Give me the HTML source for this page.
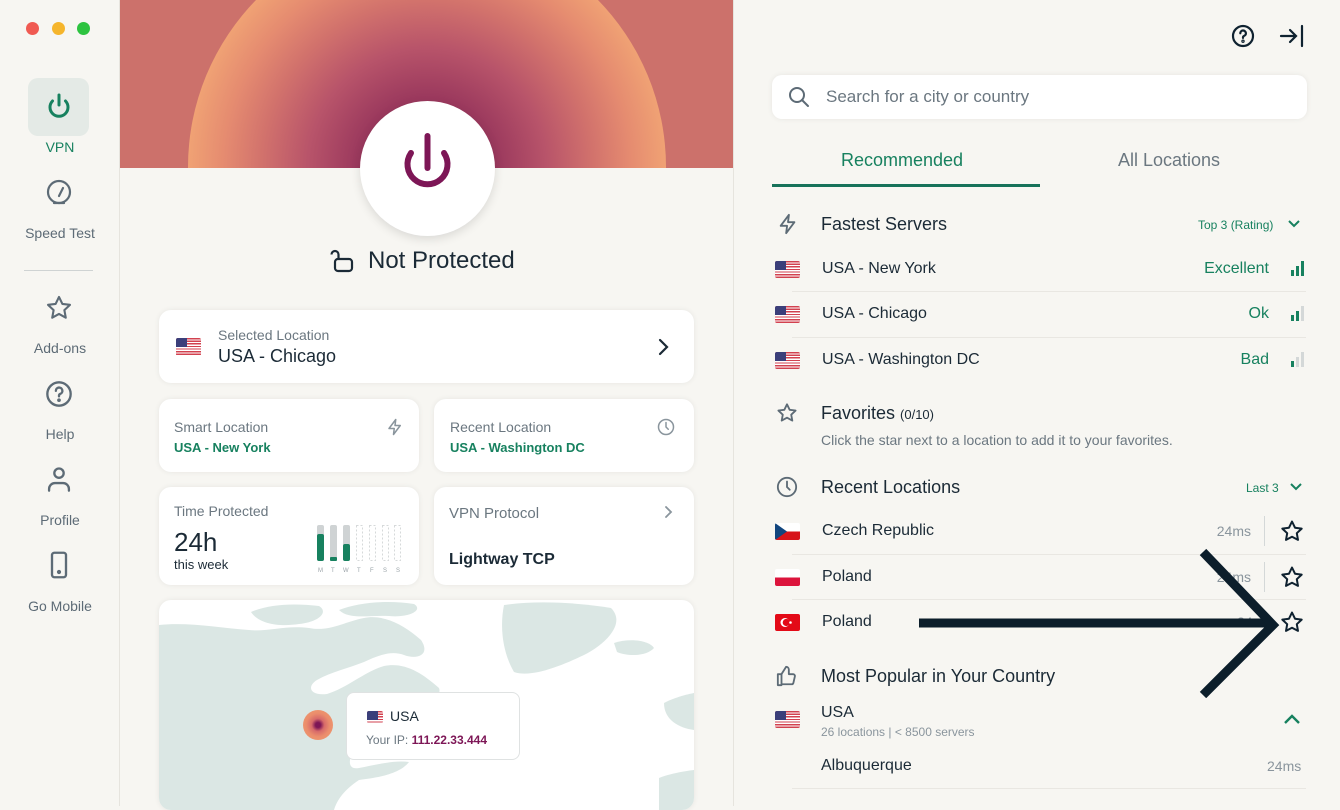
<!DOCTYPE html>
<html><head><meta charset="utf-8"><style>
*{box-sizing:border-box;margin:0;padding:0}
body{width:1340px;height:806px;overflow:hidden;background:#f7f6f2;font-family:"Liberation Sans",sans-serif;color:#1b2a36;position:relative}
.abs{position:absolute}
.side{left:0;top:0;width:120px;height:806px;border-right:1px solid #e6e4de;background:#f7f6f2}
.nav{position:absolute;left:0;width:120px;text-align:center;font-size:14px;color:#5d6b76}
.card{position:absolute;background:#fff;border-radius:12px;box-shadow:0 0 6px rgba(0,0,0,.07)}
.lbl{font-size:14px;color:#6b7780}
.grn{color:#17815f}
.row{position:absolute;left:772px;width:534px;height:45px}
.row .n{position:absolute;left:50px;top:13px;font-size:16px;color:#1b2a36}
.flag{position:absolute;left:3px;width:25px;height:17px;border-radius:2px;overflow:hidden}
.us{background:repeating-linear-gradient(#d2414f 0 1.3px,#fff 1.3px 2.6px)}
.us:after{content:"";position:absolute;left:0;top:0;width:11px;height:9px;background:#3b3f7a}
.sep{position:absolute;left:792px;width:514px;height:1px;background:#e9e7e2}
.h{position:absolute;left:821px;font-size:18px;color:#1b2a36}
</style></head><body>

<div class="abs side"></div>
<div class="abs" style="left:26px;top:22px;width:13px;height:13px;border-radius:50%;background:#f05a52"></div>
<div class="abs" style="left:52px;top:22px;width:13px;height:13px;border-radius:50%;background:#f5b52c"></div>
<div class="abs" style="left:77px;top:22px;width:13px;height:13px;border-radius:50%;background:#2dc340"></div>

<div class="abs" style="left:28px;top:78px;width:61px;height:58px;border-radius:10px;background:#e4eae6"></div>
<svg class="abs" style="left:44px;top:92px" width="30" height="30" viewBox="0 0 30 30" fill="none" stroke="#17815f" stroke-width="3" stroke-linecap="round"><path d="M15 3v10"/><path d="M8.5 9a9 9 0 1 0 13 0"/></svg>
<div class="nav" style="top:139px;color:#17815f">VPN</div>
<svg class="abs" style="left:45px;top:179px" width="28" height="28" viewBox="0 0 28 28" fill="none" stroke="#5d6b76" stroke-width="2.2" stroke-linecap="round"><circle cx="14" cy="13" r="11"/><path d="M14 17l4-8"/><path d="M9 24h10"/></svg>
<div class="nav" style="top:225px">Speed Test</div>
<div class="abs" style="left:24px;top:270px;width:69px;height:1px;background:#cfd3d3"></div>
<svg class="abs" style="left:45px;top:294px" width="28" height="28" viewBox="0 0 24 24" fill="none" stroke="#5d6b76" stroke-width="1.8" stroke-linejoin="round"><path d="M12 2.5l2.9 6 6.5.8-4.8 4.5 1.2 6.5L12 17.1 6.2 20.3l1.2-6.5L2.6 9.3l6.5-.8z"/></svg>
<div class="nav" style="top:340px">Add-ons</div>
<svg class="abs" style="left:45px;top:380px" width="28" height="28" viewBox="0 0 24 24" fill="none" stroke="#5d6b76" stroke-width="2" stroke-linecap="round"><circle cx="12" cy="12" r="10"/><path d="M9.3 9.3a2.8 2.8 0 1 1 3.8 2.6c-.7.3-1.1.9-1.1 1.6v.5"/><circle cx="12" cy="17.3" r=".6" fill="#5d6b76"/></svg>
<div class="nav" style="top:426px">Help</div>
<svg class="abs" style="left:45px;top:465px" width="28" height="28" viewBox="0 0 24 24" fill="none" stroke="#5d6b76" stroke-width="2" stroke-linecap="round"><circle cx="12" cy="7" r="4"/><path d="M3.5 22v-1.5a5 5 0 0 1 5-5h7a5 5 0 0 1 5 5V22"/></svg>
<div class="nav" style="top:512px">Profile</div>
<svg class="abs" style="left:45px;top:551px" width="28" height="28" viewBox="0 0 24 24" fill="none" stroke="#5d6b76" stroke-width="2"><rect x="6" y="1.5" width="12" height="21" rx="2"/><circle cx="12" cy="18" r=".8" fill="#5d6b76"/></svg>
<div class="nav" style="top:598px">Go Mobile</div>

<!-- hero -->
<div class="abs" style="left:120px;top:0;width:613px;height:168px;overflow:hidden;background:#cc716b">
<div class="abs" style="left:68px;top:-72px;width:478px;height:478px;border-radius:50%;background:radial-gradient(circle closest-side,#8f2a57 0%,#9c3a5e 30%,#b8546a 50%,#d0706c 68%,#e58b70 85%,#f0a274 100%)"></div>
</div>
<div class="abs" style="left:733px;top:0;width:1px;height:806px;background:#e6e4de"></div>
<div class="abs" style="left:360px;top:101px;width:135px;height:135px;border-radius:50%;background:#fff;box-shadow:0 3px 10px rgba(0,0,0,.12)"></div>
<svg class="abs" style="left:392px;top:132px" width="72" height="72" viewBox="0 0 72 72" fill="none" stroke="#7d1656" stroke-width="6" stroke-linecap="round"><path d="M35.5 4v32"/><path d="M19 21a20 20 0 1 0 33 0"/></svg>
<svg class="abs" style="left:330px;top:248px" width="26" height="26" viewBox="0 0 26 26" fill="none" stroke="#1b2a36" stroke-width="2.2"><rect x="5" y="11" width="17" height="12" rx="3"/><path d="M8.5 11V6.5a3.5 3.5 0 0 0-7 0"/></svg>
<div class="abs" style="left:368px;top:247px;font-size:24px;color:#1b2a36">Not Protected</div>

<div class="card" style="left:159px;top:310px;width:535px;height:73px"></div>
<div class="flag us" style="left:176px;top:338px;width:25px;height:18px;position:absolute"></div>
<div class="abs lbl" style="left:218px;top:327px">Selected Location</div>
<div class="abs" style="left:218px;top:346px;font-size:18px">USA - Chicago</div>
<svg class="abs" style="left:655px;top:337px" width="16" height="20" viewBox="0 0 16 20" fill="none" stroke="#1b2a36" stroke-width="2.2" stroke-linecap="round"><path d="M5 3l7 7-7 7"/></svg>

<div class="card" style="left:159px;top:399px;width:260px;height:73px"></div>
<div class="abs lbl" style="left:174px;top:419px">Smart Location</div>
<div class="abs grn" style="left:174px;top:440px;font-size:13px;font-weight:bold">USA - New York</div>
<svg class="abs" style="left:386px;top:418px" width="18" height="18" viewBox="0 0 24 24" fill="none" stroke="#8a959d" stroke-width="2" stroke-linejoin="round"><path d="M13 2L4 14h7l-1 8 9-12h-7z"/></svg>
<div class="card" style="left:434px;top:399px;width:260px;height:73px"></div>
<div class="abs lbl" style="left:450px;top:419px">Recent Location</div>
<div class="abs grn" style="left:450px;top:440px;font-size:13px;font-weight:bold">USA - Washington DC</div>
<svg class="abs" style="left:657px;top:418px" width="18" height="18" viewBox="0 0 24 24" fill="none" stroke="#8a959d" stroke-width="2" stroke-linecap="round"><circle cx="12" cy="12" r="10"/><path d="M12 6v6l3 3"/></svg>

<div class="card" style="left:159px;top:487px;width:260px;height:98px"></div>
<div class="abs lbl" style="left:174px;top:503px">Time Protected</div>
<div class="abs" style="left:174px;top:527px;font-size:26px">24h</div>
<div class="abs" style="left:174px;top:557px;font-size:13px">this week</div>
<svg class="abs" style="left:310px;top:522px" width="100" height="52" viewBox="0 0 100 52">
<g fill="#cfd3d4"><rect x="7" y="3" width="7" height="36" rx="2"/><rect x="20" y="3" width="7" height="36" rx="2"/><rect x="33" y="3" width="7" height="36" rx="2"/></g>
<g fill="#17815f"><rect x="7" y="12" width="7" height="27" rx="2"/><rect x="20" y="35" width="7" height="4" rx="1"/><rect x="33" y="22" width="7" height="17" rx="2"/></g>
<g fill="none" stroke="#d6d9da" stroke-dasharray="2 2"><rect x="46.5" y="3.5" width="6" height="35"/><rect x="59.5" y="3.5" width="6" height="35"/><rect x="72.5" y="3.5" width="6" height="35"/><rect x="84.5" y="3.5" width="6" height="35"/></g>
<g font-size="6" fill="#9aa3a8" font-family="Liberation Sans"><text x="8" y="50">M</text><text x="21" y="50">T</text><text x="33" y="50">W</text><text x="47" y="50">T</text><text x="60" y="50">F</text><text x="73" y="50">S</text><text x="86" y="50">S</text></g></svg>

<div class="card" style="left:434px;top:487px;width:260px;height:98px"></div>
<div class="abs" style="left:449px;top:505px;font-size:15px;color:#6b7780">VPN Protocol</div>
<div class="abs" style="left:449px;top:551px;font-size:16px;font-weight:bold;color:#1b2a36">Lightway TCP</div>
<svg class="abs" style="left:662px;top:504px" width="12" height="16" viewBox="0 0 12 16" fill="none" stroke="#8a959d" stroke-width="1.8" stroke-linecap="round"><path d="M4 3l5 5-5 5"/></svg>

<!-- map -->
<div class="card" style="left:159px;top:600px;width:535px;height:210px;overflow:hidden;background:#fff">
<svg width="535" height="210" viewBox="0 0 535 210" fill="#dbe7e4">
<path d="M0 25 C30 22 60 28 90 30 C110 32 125 25 150 28 C170 32 185 22 205 18 C225 14 245 25 262 40 C272 55 258 60 245 55 C232 50 218 56 205 62 C190 68 172 72 158 80 C148 86 150 96 168 94 C188 88 205 72 225 66 C245 62 262 72 280 88 C284 98 265 100 250 110 C230 125 205 135 195 150 C188 162 190 170 200 168 C215 165 235 160 250 162 C240 175 215 178 200 180 C185 190 178 200 175 210 L0 210Z"/>
<path d="M92 12 C110 4 135 3 160 6 C170 12 160 22 140 24 C120 27 100 24 92 12Z"/>
<path d="M180 10 C200 2 230 0 255 4 C265 10 250 18 230 16 C210 15 190 20 180 10Z"/>
<path d="M200 45 C210 38 222 40 222 50 C215 56 204 55 200 45Z"/>
<path d="M345 5 C380 0 420 3 452 8 C468 24 445 45 425 55 C402 66 372 78 355 72 C345 55 340 30 345 5Z"/>
<path d="M455 43 C470 38 490 40 495 48 C488 56 470 57 458 52Z"/>
<path d="M505 103 C518 96 535 93 535 93 L535 130 C520 128 505 120 505 103Z"/>
<path d="M500 178 C515 172 535 170 535 170 L535 210 L500 210Z"/>
</svg>
</div>
<div class="abs" style="left:303px;top:710px;width:30px;height:30px;border-radius:50%;background:radial-gradient(circle,#7d1656 0 12%,#d76a6a 30%,#eb8d6c 55%,#f0a072 100%)"></div>
<div class="abs" style="left:346px;top:692px;width:174px;height:68px;background:#fff;border:1px solid #dfe2e2;border-radius:8px"></div>
<div class="flag us" style="left:367px;top:711px;width:16px;height:12px;position:absolute"></div>
<div class="abs" style="left:390px;top:708px;font-size:14px">USA</div>
<div class="abs" style="left:366px;top:733px;font-size:12px;color:#6b7780">Your IP: <b style="color:#7d1656">111.22.33.444</b></div>

<!-- right -->
<svg class="abs" style="left:1231px;top:24px" width="24" height="24" viewBox="0 0 24 24" fill="none" stroke="#0f2230" stroke-width="2.2" stroke-linecap="round"><circle cx="12" cy="12" r="10"/><path d="M9.3 9.3a2.8 2.8 0 1 1 3.8 2.6c-.7.3-1.1.9-1.1 1.6v.4"/><circle cx="12" cy="17.2" r=".6"/></svg>
<svg class="abs" style="left:1279px;top:24px" width="26" height="24" viewBox="0 0 26 24" fill="none" stroke="#0f2230" stroke-width="2.2" stroke-linecap="round"><path d="M2 12h15M11 6l6 6-6 6M23 2v20"/></svg>
<div class="card" style="left:772px;top:75px;width:535px;height:44px;border-radius:10px"></div>
<svg class="abs" style="left:788px;top:86px" width="22" height="22" viewBox="0 0 22 22" fill="none" stroke="#5d6b76" stroke-width="2" stroke-linecap="round"><circle cx="9" cy="9" r="7"/><path d="M14 14l6 6"/></svg>
<div class="abs" style="left:826px;top:87px;font-size:17px;color:#6b7780">Search for a city or country</div>
<div class="abs grn" style="left:841px;top:150px;font-size:18px">Recommended</div>
<div class="abs" style="left:1118px;top:150px;font-size:18px;color:#6b7780">All Locations</div>
<div class="abs" style="left:772px;top:184px;width:268px;height:3px;background:#17725a"></div>

<svg class="abs" style="left:777px;top:213px" width="22" height="22" viewBox="0 0 24 24" fill="none" stroke="#5d6b76" stroke-width="2" stroke-linejoin="round"><path d="M13 2L4 14h7l-1 8 9-12h-7z"/></svg>
<div class="h" style="top:214px">Fastest Servers</div>
<div class="abs grn" style="left:1198px;top:218px;font-size:12px">Top 3 (Rating)</div>
<svg class="abs" style="left:1287px;top:218px" width="14" height="12" viewBox="0 0 14 12" fill="none" stroke="#17815f" stroke-width="2"><path d="M2 3l5 5 5-5"/></svg>

<div class="row" style="top:247px"><div class="flag us" style="top:14px"></div><div class="n">USA - New York</div><div class="abs grn" style="right:37px;top:13px;font-size:16px">Excellent</div>
<svg class="abs" style="right:2px;top:14px" width="14" height="16"><rect x="1" y="9" width="3" height="6" fill="#17815f"/><rect x="6" y="5" width="3" height="10" fill="#17815f"/><rect x="11" y="0" width="3" height="15" fill="#17815f"/></svg></div>
<div class="sep" style="top:291px"></div>
<div class="row" style="top:292px"><div class="flag us" style="top:14px"></div><div class="n">USA - Chicago</div><div class="abs grn" style="right:37px;top:13px;font-size:16px">Ok</div>
<svg class="abs" style="right:2px;top:14px" width="14" height="16"><rect x="1" y="9" width="3" height="6" fill="#17815f"/><rect x="6" y="5" width="3" height="10" fill="#17815f"/><rect x="11" y="0" width="3" height="15" fill="#d4d8d8"/></svg></div>
<div class="sep" style="top:337px"></div>
<div class="row" style="top:338px"><div class="flag us" style="top:14px"></div><div class="n">USA - Washington DC</div><div class="abs grn" style="right:37px;top:13px;font-size:16px">Bad</div>
<svg class="abs" style="right:2px;top:14px" width="14" height="16"><rect x="1" y="9" width="3" height="6" fill="#17815f"/><rect x="6" y="5" width="3" height="10" fill="#d4d8d8"/><rect x="11" y="0" width="3" height="15" fill="#d4d8d8"/></svg></div>

<svg class="abs" style="left:776px;top:402px" width="22" height="22" viewBox="0 0 24 24" fill="none" stroke="#5d6b76" stroke-width="2" stroke-linejoin="round"><path d="M12 2.5l2.9 6 6.5.8-4.8 4.5 1.2 6.5L12 17.1 6.2 20.3l1.2-6.5L2.6 9.3l6.5-.8z"/></svg>
<div class="h" style="top:403px">Favorites <span style="font-size:13px">(0/10)</span></div>
<div class="abs" style="left:821px;top:432px;font-size:14px;color:#6b7780">Click the star next to a location to add it to your favorites.</div>

<svg class="abs" style="left:776px;top:476px" width="22" height="22" viewBox="0 0 24 24" fill="none" stroke="#5d6b76" stroke-width="2" stroke-linecap="round"><circle cx="12" cy="12" r="10"/><path d="M12 6v6l3 3"/></svg>
<div class="h" style="top:477px">Recent Locations</div>
<div class="abs grn" style="left:1246px;top:481px;font-size:12px">Last 3</div>
<svg class="abs" style="left:1289px;top:481px" width="14" height="12" viewBox="0 0 14 12" fill="none" stroke="#17815f" stroke-width="2"><path d="M2 3l5 5 5-5"/></svg>

<div class="row" style="top:509px"><div class="flag" style="top:14px;background:linear-gradient(#fff 50%,#d7141a 50%)"><svg width="25" height="17" style="position:absolute"><path d="M0 0L12 8.5 0 17z" fill="#11457e"/></svg></div><div class="n">Czech Republic</div><div class="abs" style="right:55px;top:14px;font-size:14px;color:#8a959d">24ms</div></div>
<div class="abs" style="left:1264px;top:516px;width:1px;height:30px;background:#d4d8d8"></div>
<div class="sep" style="top:554px"></div>
<div class="row" style="top:555px"><div class="flag" style="top:14px;background:linear-gradient(#fff 50%,#dc143c 50%)"></div><div class="n">Poland</div><div class="abs" style="right:55px;top:14px;font-size:14px;color:#8a959d">24ms</div></div>
<div class="abs" style="left:1264px;top:562px;width:1px;height:30px;background:#d4d8d8"></div>
<div class="sep" style="top:599px"></div>
<div class="row" style="top:600px"><div class="flag" style="top:14px;background:#e30a17"><svg width="25" height="17" style="position:absolute"><circle cx="10" cy="8.5" r="4.5" fill="#fff"/><circle cx="11.3" cy="8.5" r="3.6" fill="#e30a17"/><circle cx="15.5" cy="8.5" r="1.3" fill="#fff"/></svg></div><div class="n">Poland</div></div>
<svg class="abs" style="left:1280px;top:520px" width="24" height="120" viewBox="0 0 24 120" fill="none" stroke="#0f2230" stroke-width="2" stroke-linejoin="round"><path d="M12 1.5l3 6.2 6.7.9-4.9 4.6 1.2 6.7L12 16.7 6 19.9l1.2-6.7-4.9-4.6 6.7-.9z"/><path d="M12 47.5l3 6.2 6.7.9-4.9 4.6 1.2 6.7L12 62.7 6 65.9l1.2-6.7-4.9-4.6 6.7-.9z"/><path d="M12 92.5l3 6.2 6.7.9-4.9 4.6 1.2 6.7L12 107.7 6 110.9l1.2-6.7-4.9-4.6 6.7-.9z"/></svg>
<div class="abs" style="left:1237px;top:614px;font-size:14px;color:#8a959d">24</div>
<svg class="abs" style="left:915px;top:548px" width="370" height="150" viewBox="0 0 370 150" fill="none" stroke="#0c1e2b" stroke-width="9"><path d="M4 75h350"/><path d="M288 4l70 73-70 70"/></svg>

<svg class="abs" style="left:776px;top:665px" width="22" height="22" viewBox="0 0 24 24" fill="none" stroke="#5d6b76" stroke-width="2" stroke-linejoin="round"><path d="M2 10h4v12H2z"/><path d="M6 21h11a2 2 0 0 0 2-1.6l1.6-7A2 2 0 0 0 18.6 10H14V5a3 3 0 0 0-3-3l-5 8"/></svg>
<div class="h" style="top:666px">Most Popular in Your Country</div>
<div class="flag us" style="left:775px;top:711px;position:absolute"></div>
<div class="abs" style="left:821px;top:704px;font-size:16px">USA</div>
<div class="abs" style="left:821px;top:725px;font-size:12px;color:#8a959d">26 locations | &lt; 8500 servers</div>
<svg class="abs" style="left:1282px;top:712px" width="20" height="14" viewBox="0 0 20 14" fill="none" stroke="#17815f" stroke-width="2.4"><path d="M3 11l7-7 7 7"/></svg>
<div class="abs" style="left:821px;top:757px;font-size:16px">Albuquerque</div>
<div class="abs" style="left:1267px;top:758px;font-size:14px;color:#8a959d">24ms</div>
<div class="sep" style="top:788px"></div>
</body></html>
